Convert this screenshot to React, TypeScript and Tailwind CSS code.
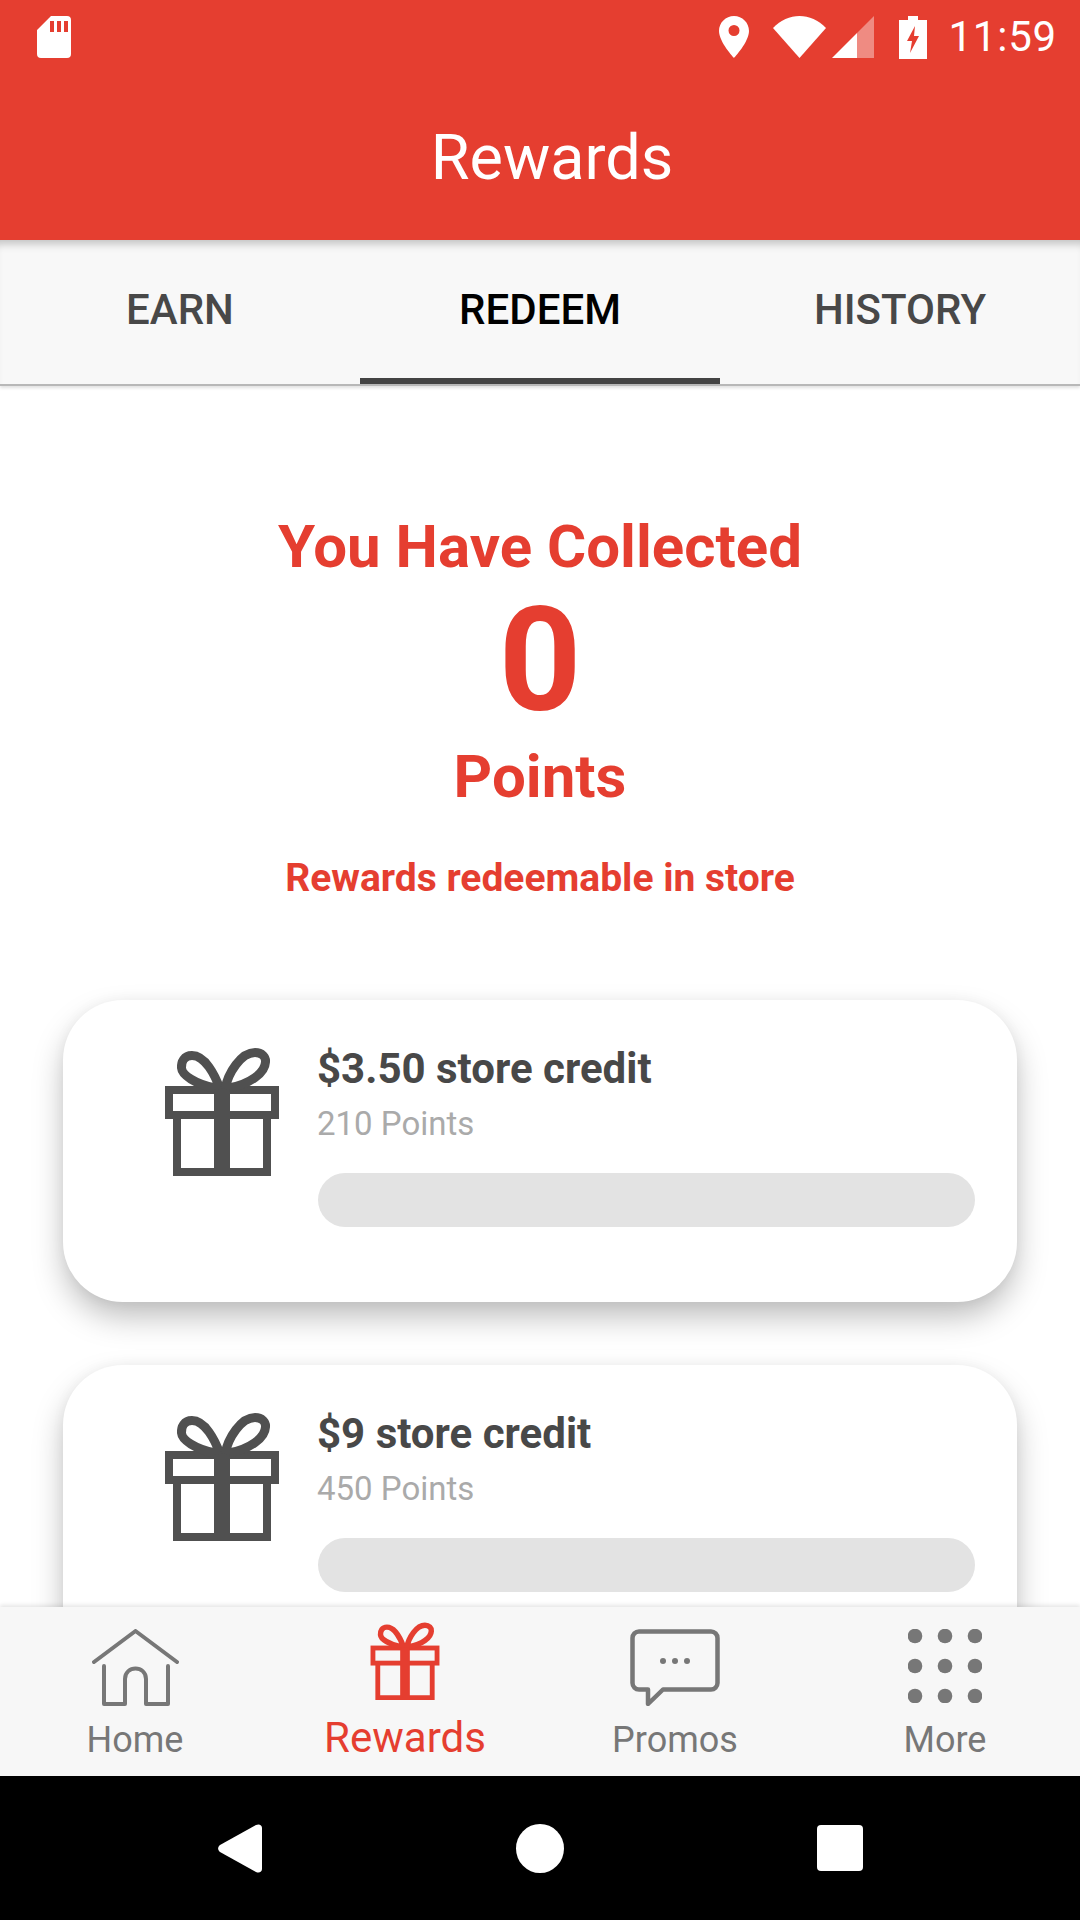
import type { ReactNode } from "react";

const rewards = [
  { title: "$3.50 store credit", points: "210 Points" },
  { title: "$9 store credit", points: "450 Points" },
];

// gift box used on the cards and in the tab bar
function GiftIcon({ className }: { className: string }) {
  return (
    <svg viewBox="0 0 114 129" className={className} fill="none" stroke="currentColor" strokeWidth="8">
      <rect x="4" y="43" width="106" height="25" />
      <path d="M12 68V125H102V68" />
      <rect x="49" y="39" width="16" height="90" fill="currentColor" stroke="none" />
      <path strokeWidth="9" d="M55 42C50 28 40 8.500 27 8.500C19 8.500 16 15 16.500 21C17 28 30 37 50 41" />
      <path strokeWidth="9" d="M60 42C63 26 76 5.500 90 5.500C97 5.500 101 10 100.500 15C100 26 85 37 64 41" />
    </svg>
  );
}

function HomeIcon() {
  return (
    <svg viewBox="0 0 87 77" className="h-[77px] w-[87px]" fill="none" stroke="currentColor" strokeWidth="4" strokeLinecap="round" strokeLinejoin="round">
      <path d="M2 33L43.500 2L85 33" />
      <path d="M12 37V75H33V50C33 36 54 36 54 50V75H76V37" />
    </svg>
  );
}

function PromoIcon() {
  return (
    <svg viewBox="0 0 90 77" className="h-[77px] w-[90px]" fill="none" stroke="currentColor" strokeWidth="4.500" strokeLinejoin="round">
      <path d="M9 2.500H81A6.500 6.500 0 0 1 87.500 9V54A6.500 6.500 0 0 1 81 60.500H33L18 75V60.500H9A6.500 6.500 0 0 1 2.500 54V9A6.500 6.500 0 0 1 9 2.500Z" />
      <circle cx="33" cy="32" r="3" fill="currentColor" stroke="none" />
      <circle cx="45" cy="32" r="3" fill="currentColor" stroke="none" />
      <circle cx="57" cy="32" r="3" fill="currentColor" stroke="none" />
    </svg>
  );
}

function DotsIcon() {
  const dots = [7, 37, 67];
  return (
    <svg viewBox="0 0 74 74" className="mb-[3px] h-[74px] w-[74px]" fill="currentColor">
      {dots.map((y) => dots.map((x) => <circle key={`${x}-${y}`} cx={x} cy={y} r="7.300" />))}
    </svg>
  );
}

function NavItem({ label, icon, active }: { label: string; icon: ReactNode; active?: boolean }) {
  return (
    <div className={`flex flex-col items-center ${active ? "text-[#e53e30]" : "text-[#777777]"}`}>
      <div className="flex h-[83px] items-end justify-center">{icon}</div>
      <span className={active ? "mt-[8px] text-[42px] leading-[48px]" : "mt-[12px] text-[36px] leading-[44px]"}>{label}</span>
    </div>
  );
}

export default function App() {
  return (
    <div className="flex h-[1920px] w-[1080px] flex-col overflow-hidden bg-white font-['Roboto',sans-serif]">
      {/* Header */}
      <div className="relative z-20 h-[240px] shrink-0 bg-[#e53e30] text-white">
        <div className="flex h-[73px] items-center justify-between pt-[1px] pr-[23px] pl-[37px]">
          <svg viewBox="0 0 34 42" className="h-[42px] w-[34px]" fill="white">
            <path fillRule="evenodd" d="M14 0H30A4 4 0 0 1 34 4V38A4 4 0 0 1 30 42H4A4 4 0 0 1 0 38V14ZM13 5V16H17V5ZM20 5V16H24V5ZM27 5V16H31V5Z" />
          </svg>
          <div className="flex items-center">
            <svg viewBox="0 0 30 42" className="h-[42px] w-[30px]">
              <path fillRule="evenodd" fill="white" d="M15 0C6.700 0 0 6.700 0 15C0 26 15 42 15 42C15 42 30 26 30 15C30 6.700 23.300 0 15 0ZM15 20A5.500 5.500 0 1 1 15 9A5.500 5.500 0 0 1 15 20Z" />
            </svg>
            <svg viewBox="0 0 53 42" className="ml-[24px] h-[42px] w-[53px]" fill="white">
              <path d="M0 12C15 -4 38 -4 53 12L26.500 42Z" />
            </svg>
            <svg viewBox="0 0 42 42" className="ml-[6px] h-[42px] w-[42px]">
              <path fill="white" d="M0 42L25 17V42Z" />
              <path fill="white" fillOpacity="0.4" d="M25 17L42 0V42H25Z" />
            </svg>
            <svg viewBox="0 0 28 43" className="ml-[25px] h-[43px] w-[28px]">
              <path fill="white" d="M9 0H19V4H28V43H0V4H9Z" />
              <path fill="#e53e30" d="M16 10L8 25H13L11 37L20 20H15Z" />
            </svg>
            <span className="ml-[21px] text-[42px] leading-none tracking-[0.800px]">11:59</span>
          </div>
        </div>
        <h1 className="mt-[50px] pl-[24px] text-center text-[63px] leading-[70px] font-normal">Rewards</h1>
      </div>

      {/* Tabs */}
      <div className="relative z-10 flex h-[146px] shrink-0 border-b-[2px] border-[#b8b8b8] bg-[#f8f8f8] shadow-[inset_0_10px_8px_-6px_rgba(0,0,0,0.22),0_2px_3px_rgba(0,0,0,0.12)]">
        {["EARN", "REDEEM", "HISTORY"].map((tab) => (
          <div
            key={tab}
            className={`flex w-[360px] items-center justify-center border-b-[6px] text-[42px] font-medium ${
              tab === "REDEEM" ? "border-[#444444] text-black" : "border-transparent text-[#484848]"
            }`}
          >
            {tab}
          </div>
        ))}
      </div>

      {/* Points summary and reward cards */}
      <div className="min-h-0 flex-1 overflow-hidden">
        <div className="flex flex-col items-center pt-[128px] font-bold text-[#e53e30]">
          <p className="text-[60px] leading-[66px]">You Have Collected</p>
          <p className="mt-[2px] text-[144px] leading-[158px]">0</p>
          <p className="mt-[4px] text-[60px] leading-[66px]">Points</p>
          <p className="mt-[46px] text-[39px] leading-[44px]">Rewards redeemable in store</p>
        </div>
        <div className="mt-[100px] flex flex-col gap-[63px] px-[63px]">
          {rewards.map((reward) => (
            <div key={reward.title} className="flex h-[302px] shrink-0 rounded-[60px] bg-white pt-[47px] pr-[42px] pl-[102px] shadow-[0_16px_32px_-2px_rgba(0,0,0,0.27),0_0_14px_rgba(0,0,0,0.04)]">
              <GiftIcon className="h-[129px] w-[114px] shrink-0 text-[#505050]" />
              <div className="ml-[38px] flex-1">
                <p className="mt-[-1px] text-[42px] leading-[46px] font-bold text-[#484848]">{reward.title}</p>
                <p className="mt-[14px] text-[33px] leading-[36px] text-[#aaaaaa]">{reward.points}</p>
                <div className="mt-[31px] ml-[1px] h-[54px] rounded-full bg-[#e3e3e3]" />
              </div>
            </div>
          ))}
        </div>
      </div>

      {/* Bottom tabs */}
      <div className="relative z-10 grid h-[169px] shrink-0 grid-cols-4 bg-[#f7f7f7] pt-[16px] shadow-[0_-2px_4px_rgba(0,0,0,0.1)]">
        <NavItem label="Home" icon={<HomeIcon />} />
        <NavItem label="Rewards" icon={<GiftIcon className="mb-[6px] h-[78px] w-[72px]" />} active />
        <NavItem label="Promos" icon={<PromoIcon />} />
        <NavItem label="More" icon={<DotsIcon />} />
      </div>

      {/* Android navigation */}
      <div className="flex h-[144px] shrink-0 items-center gap-[254px] bg-black pl-[218px]">
        <svg viewBox="0 0 44 49" className="h-[49px] w-[44px]" fill="white">
          <path d="M2 21L38 1C41 -0.500 44 1 44 4V45C44 48 41 49.500 38 48L2 28C-0.500 26 -0.500 23 2 21Z" />
        </svg>
        <svg viewBox="0 0 48 49" className="h-[49px] w-[48px]" fill="white">
          <ellipse cx="24" cy="24.500" rx="24" ry="24.500" />
        </svg>
        <svg viewBox="0 0 46 46" className="ml-[-1px] h-[46px] w-[46px]" fill="white">
          <rect width="46" height="46" rx="4" />
        </svg>
      </div>
    </div>
  );
}
